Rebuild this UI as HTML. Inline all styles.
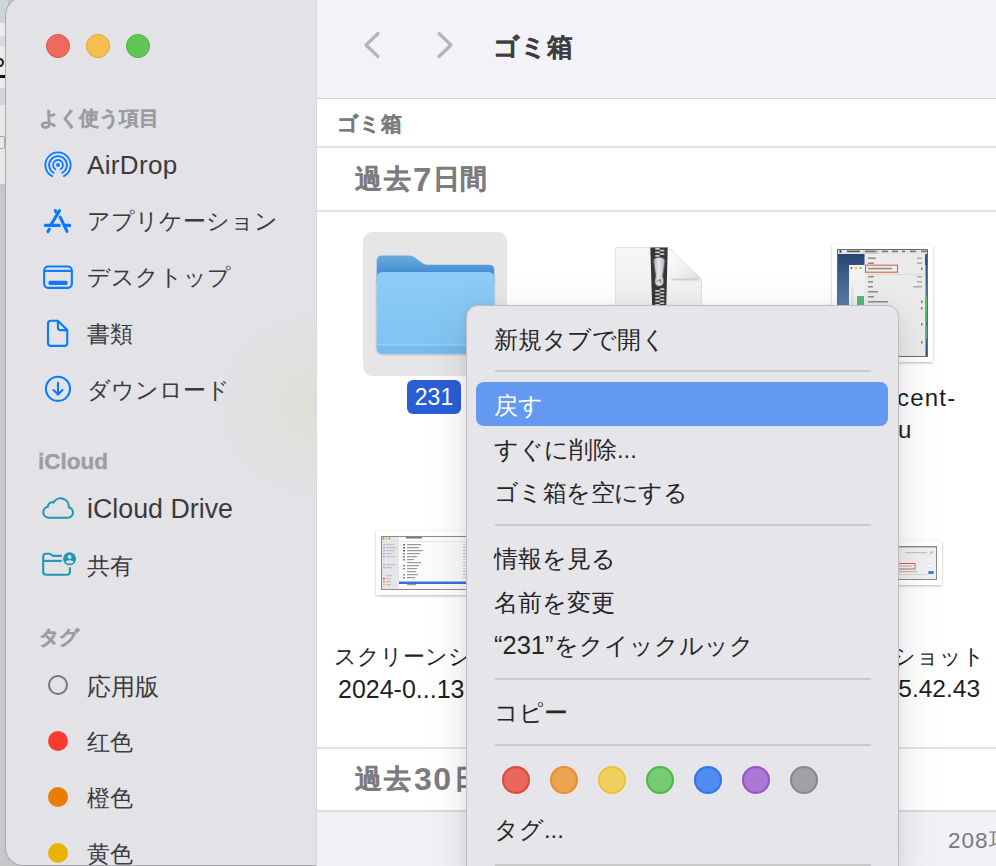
<!DOCTYPE html>
<html><head><meta charset="utf-8">
<style>
*{margin:0;padding:0;box-sizing:border-box}
html,body{width:996px;height:866px;overflow:hidden;background:#c6c6c8;font-family:"Liberation Sans",sans-serif;position:relative}
.a{position:absolute;white-space:nowrap}
#sliver{position:absolute;left:0;top:0;width:8px;height:866px;background:#c8c8ca}
#side{position:absolute;left:5px;top:-3px;width:312px;height:869px;background:#e3e2e7;border-radius:18px 0 0 18px;border:1px solid #a9a9ad;border-right:none;overflow:hidden}
#main{position:absolute;left:316px;top:0;width:680px;height:866px;background:#fff;border-left:1px solid #d6d6da}
.sh{color:#9d9da1;font-weight:700;font-size:20px;-webkit-text-stroke:0.35px #9d9da1}
.si{color:#3b3b3d;font-size:23px}
.hr{position:absolute;left:0;width:680px;height:2px;background:#e2e2e4}
.mi{position:absolute;left:27px;color:#262627;font-size:23.8px;white-space:nowrap}
.sep{position:absolute;left:28px;width:376px;height:2px;background:#c9c9cc}
.dot{position:absolute;width:28px;height:28px;border-radius:50%;top:465px}
.tag{position:absolute;left:48px;width:20px;height:20px;border-radius:50%}
</style></head><body>
<div id="sliver">
  <div class="a" style="left:0;top:0;width:8px;height:23px;background:#cfd4d9"></div>
  <div class="a" style="left:0;top:23px;width:8px;height:13px;background:#ededed"></div>
  <div class="a" style="left:0;top:36px;width:8px;height:10px;background:#dadadc"></div>
  <div class="a" style="left:0;top:46px;width:8px;height:42px;background:#ebebeb"></div>
  <div class="a" style="left:-4px;top:58px;width:8px;height:9px;border:2.5px solid #222;border-radius:50%"></div>
  <div class="a" style="left:0;top:75px;width:8px;height:3px;background:#111"></div>
  <div class="a" style="left:0;top:88px;width:8px;height:17px;background:#d6d6d9"></div>
  <div class="a" style="left:0;top:105px;width:8px;height:79px;background:#e8e8e8"></div>
  <div class="a" style="left:0;top:184px;width:8px;height:1px;background:#c0c0c0"></div>
  <div class="a" style="left:-6px;top:136px;width:11px;height:13px;border:1px solid #a8a8a8;border-radius:2px"></div>
</div>
<div id="side"></div>
<div class="a" style="left:180px;top:270px;width:136px;height:260px;background:radial-gradient(ellipse 105px 100px at 136px 135px, rgba(219,220,203,0.6), rgba(219,220,203,0) 100%)"></div>
<!-- traffic lights -->
<div class="a" style="left:46px;top:34px;width:24px;height:24px;border-radius:50%;background:#ee6a5f;border:1px solid #d8544a"></div>
<div class="a" style="left:86px;top:34px;width:24px;height:24px;border-radius:50%;background:#f5be4f;border:1px solid #dea236"></div>
<div class="a" style="left:126px;top:34px;width:24px;height:24px;border-radius:50%;background:#62c655;border:1px solid #4fad44"></div>
<div class="a sh" style="left:39px;top:105px">よく使う項目</div>
<div class="a si" style="left:87px;top:150px;font-size:26px;letter-spacing:0.35px">AirDrop</div>
<div class="a si" style="left:87px;top:206px;font-size:23.2px">アプリケーション</div>
<div class="a si" style="left:87px;top:262px">デスクトップ</div>
<div class="a si" style="left:87px;top:319px">書類</div>
<div class="a si" style="left:87px;top:375px;font-size:23px">ダウンロード</div>
<div class="a sh" style="left:38px;top:449px;font-size:22.5px">iCloud</div>
<div class="a si" style="left:87px;top:494px;font-size:26.8px">iCloud Drive</div>
<div class="a si" style="left:87px;top:551px;font-size:22.5px">共有</div>
<div class="a sh" style="left:39px;top:624px">タグ</div>
<div class="a si" style="left:87px;top:671px;font-size:23.5px">応用版</div>
<div class="a si" style="left:87px;top:727px">红色</div>
<div class="a si" style="left:87px;top:783px">橙色</div>
<div class="a si" style="left:87px;top:839px">黄色</div>
<div class="a" style="left:48px;top:675px;width:20px;height:20px;border-radius:50%;border:2px solid #77777a"></div>
<div class="a" style="left:48px;top:731px;width:20px;height:20px;border-radius:50%;background:#fb3b30"></div>
<div class="a" style="left:48px;top:787px;width:20px;height:20px;border-radius:50%;background:#e97c02"></div>
<div class="a" style="left:48px;top:843px;width:20px;height:20px;border-radius:50%;background:#e9b300"></div>

<div id="main"></div>
<div class="a" style="left:317px;top:0;width:679px;height:98px;background:#f3f2f7"></div>
<div class="a" style="left:317px;top:97.5px;width:679px;height:1.5px;background:#d2d2d5"></div>
<svg class="a" style="left:360px;top:28px" width="24" height="34" viewBox="0 0 24 34"><path d="M18 5.5 L6 17 L18 28.5" fill="none" stroke="#b5b5b9" stroke-width="3.2" stroke-linecap="round" stroke-linejoin="round"/></svg>
<svg class="a" style="left:433px;top:28px" width="24" height="34" viewBox="0 0 24 34"><path d="M6 5.5 L18 17 L6 28.5" fill="none" stroke="#b5b5b9" stroke-width="3.2" stroke-linecap="round" stroke-linejoin="round"/></svg>
<div class="a" style="left:493px;top:30px;font-size:26.3px;font-weight:700;color:#3d3d3f;-webkit-text-stroke:0.25px #3d3d3f">ゴミ箱</div>
<div class="a" style="left:337px;top:110px;font-size:21px;font-weight:700;color:#7a7a7c;-webkit-text-stroke:0.3px #7a7a7c">ゴミ箱</div>
<div class="a" style="left:317px;top:146px;width:679px;height:2px;background:#e3e3e5"></div>
<div class="a" style="left:355px;top:161px;font-size:26.5px;font-weight:700;color:#7c7c7e;-webkit-text-stroke:0.25px #7c7c7e;letter-spacing:1.5px">過去</div>
<div class="a" style="left:413px;top:161px;font-size:33px;font-weight:700;color:#7c7c7e">7</div>
<div class="a" style="left:433px;top:161px;font-size:26.5px;font-weight:700;color:#7c7c7e;-webkit-text-stroke:0.25px #7c7c7e;letter-spacing:0px">日間</div>
<div class="a" style="left:317px;top:210px;width:679px;height:2px;background:#e3e3e5"></div>
<div class="a" style="left:317px;top:747px;width:679px;height:2px;background:#e3e3e5"></div>
<div class="a" style="left:355px;top:761px;font-size:26.5px;font-weight:700;color:#7c7c7e;-webkit-text-stroke:0.25px #7c7c7e;letter-spacing:1.5px">過去</div>
<div class="a" style="left:414px;top:761px;font-size:32px;font-weight:700;color:#7c7c7e;letter-spacing:1.5px">30</div>
<div class="a" style="left:454px;top:761px;font-size:26.5px;font-weight:700;color:#7c7c7e;-webkit-text-stroke:0.25px #7c7c7e;letter-spacing:0px">日間</div>
<div class="a" style="left:317px;top:810px;width:679px;height:2px;background:#dcdce0"></div>
<div class="a" style="left:317px;top:812px;width:679px;height:54px;background:#f2f1f6"></div>
<div class="a" style="left:948px;top:825px;font-size:22.5px;color:#78787c;letter-spacing:1px">208項目</div>

<!-- sidebar icons -->
<svg class="a" style="left:38px;top:145px" width="40" height="40" viewBox="0 0 40 40" fill="none" stroke="#0a7aff" stroke-width="1.8" stroke-linecap="round">
<path d="M14.09 31.13 A12.6 12.6 0 1 1 25.91 31.13"/>
<path d="M15.68 27.79 A8.9 8.9 0 1 1 24.32 27.79"/>
<path d="M17.35 24.24 A5 5 0 1 1 22.65 24.24"/>
<circle cx="20" cy="20" r="1.9" fill="#0a7aff" stroke="none"/>
</svg>
<svg class="a" style="left:38px;top:200px" width="40" height="40" viewBox="0 0 40 40" fill="none" stroke="#0a7aff" stroke-width="3.1" stroke-linecap="round">
<path d="M21.5 10.6 L13 24.8 M11.3 29.3 L9.9 31.6 M17.3 10.6 L19 13.3 M22.2 17.2 L29 31.4 M7.4 25.4 H21.3 M27.4 25.4 H31.7"/>
</svg>
<svg class="a" style="left:38px;top:257px" width="40" height="40" viewBox="0 0 40 40" fill="none" stroke="#0a7aff" stroke-width="2.1">
<rect x="6.15" y="9.55" width="27.7" height="21.3" rx="4"/>
<path d="M6.15 13.9 H33.85"/>
<rect x="10.4" y="23.8" width="19.2" height="4.1" rx="1.6" fill="#0a7aff" stroke="none"/>
</svg>
<svg class="a" style="left:38px;top:313px" width="40" height="40" viewBox="0 0 40 40" fill="none" stroke="#0a7aff" stroke-width="2.1" stroke-linejoin="round">
<path d="M19.9 7.7 H13 Q10 7.7 10 10.7 V29.9 Q10 32.9 13 32.9 H26.25 Q29.25 32.9 29.25 29.9 V17.1 Z"/>
<path d="M19.9 7.7 V15.1 Q19.9 17.1 21.9 17.1 H29.25"/>
</svg>
<svg class="a" style="left:38px;top:369px" width="40" height="40" viewBox="0 0 40 40" fill="none" stroke="#0a7aff" stroke-width="2.1" stroke-linecap="round" stroke-linejoin="round">
<circle cx="19.95" cy="19.85" r="12.05"/>
<path d="M20 13.9 V25.2 M15.5 21 L20 25.4 L24.5 21"/>
</svg>
<svg class="a" style="left:38px;top:488px" width="40" height="40" viewBox="0 0 40 40" fill="none" stroke="#1f9ab3" stroke-width="2.1" stroke-linejoin="round">
<path d="M10.5 29.7 H30 A5.2 5.2 0 0 0 30.8 19.4 A8.2 8.2 0 0 0 15.6 14.4 A4.6 4.6 0 0 0 9.8 18.8 A5.5 5.5 0 0 0 10.5 29.7 Z"/>
</svg>
<svg class="a" style="left:38px;top:544px" width="40" height="40" viewBox="0 0 40 40" fill="none" stroke="#1f9ab3" stroke-width="2.1" stroke-linecap="butt" stroke-linejoin="round">
<path d="M23.8 11.9 H15.5 Q14.6 11.9 13.9 11.2 L12.9 10.3 Q12.3 9.7 11.3 9.7 H8.2 Q5.2 9.7 5.2 12.7 V27.7 Q5.2 30.7 8.2 30.7 H28.9 Q31.9 30.7 31.9 27.7 V23.3"/>
<path d="M5.2 16.9 H23.8"/>
<circle cx="31.6" cy="14.8" r="6.5" fill="#1f9ab3" stroke="none"/>
<circle cx="31.6" cy="12.9" r="1.9" fill="#e3e2e7" stroke="none"/>
<ellipse cx="31.6" cy="17.9" rx="3.6" ry="1.6" fill="#e3e2e7" stroke="none"/>
</svg>
<!-- icons -->
<div class="a" style="left:363px;top:232px;width:144px;height:144px;border-radius:9px;background:#e6e6e7"></div>
<svg class="a" style="left:374px;top:253px" width="124" height="106" viewBox="0 0 124 106">
  <defs>
    <linearGradient id="fb" x1="0" y1="0" x2="0" y2="1"><stop offset="0" stop-color="#8dcdf6"/><stop offset="1" stop-color="#7fc2f1"/></linearGradient>
    <linearGradient id="bk" gradientUnits="userSpaceOnUse" x1="0" y1="2.5" x2="0" y2="19"><stop offset="0" stop-color="#6aacde"/><stop offset="1" stop-color="#4690d4"/></linearGradient>
    <filter id="fsh" x="-10%" y="-10%" width="120%" height="130%"><feGaussianBlur stdDeviation="0.8"/></filter>
  </defs>
  <path d="M2.7 8 Q2.7 2.5 8 2.5 H35 Q38 2.5 40.5 4.3 L49 10.5 Q51 11.8 54 11.8 H115 Q120.3 11.8 120.3 17 V30 H2.7 Z" fill="url(#bk)"/>
  <rect x="2.7" y="20" width="117.6" height="81.5" rx="5.5" fill="#3a6f9c" opacity="0.45" filter="url(#fsh)"/>
  <rect x="2.7" y="19" width="117.6" height="81.4" rx="5.5" fill="url(#fb)"/>
  <rect x="2.7" y="90.7" width="117.6" height="2" fill="#93d1f7"/>
  <path d="M2.7 92.7 H120.3 V95 Q120.3 100.4 115 100.4 H8 Q2.7 100.4 2.7 95 Z" fill="#76bbec"/>
</svg>
<div class="a" style="left:407px;top:380px;width:54px;height:34px;border-radius:6px;background:#2b5fd6;color:#fff;font-size:23px;text-align:center;line-height:34px">231</div>

<!-- zip -->
<svg class="a" style="left:612px;top:244px" width="94" height="64" viewBox="0 0 94 64">
  <defs>
    <linearGradient id="flap" x1="0" y1="0" x2="1" y2="1"><stop offset="0" stop-color="#ffffff"/><stop offset="0.6" stop-color="#f0f0f0"/><stop offset="1" stop-color="#dcdcdc"/></linearGradient>
    <linearGradient id="pull" x1="0" y1="0" x2="1" y2="0"><stop offset="0" stop-color="#a9acb0"/><stop offset="0.45" stop-color="#e6e8eb"/><stop offset="1" stop-color="#b0b3b7"/></linearGradient>
    <linearGradient id="paper" x1="0" y1="0" x2="0" y2="1"><stop offset="0" stop-color="#f6f6f6"/><stop offset="1" stop-color="#efefef"/></linearGradient>
    <filter id="fs" x="-30%" y="-30%" width="160%" height="160%"><feGaussianBlur stdDeviation="1.2"/></filter>
  </defs>
  <path d="M3.5 4.5 Q3.5 3.5 4.5 3.5 H56 L89.5 35 V64 H3.5 Z" fill="url(#paper)" stroke="#e2e2e2" stroke-width="1"/>
  <path d="M57 4.5 V29 Q57 36 64 36 H88 Z" fill="#000" opacity="0.22" filter="url(#fs)"/>
  <path d="M56 3.5 V31 Q56 34.8 59.8 34.8 H89.5 Z" fill="url(#flap)"/>
  <path d="M38.3 3.5 H55.7 L54.2 64 H40.2 Z" fill="#363638"/>
  <g fill="#c9cacc"><rect x="43.2" y="4.0" width="4.6" height="1.7" rx="0.5"/><rect x="47.8" y="5.8" width="4.6" height="1.7" rx="0.5"/><rect x="43.2" y="7.5" width="4.6" height="1.7" rx="0.5"/><rect x="47.8" y="9.2" width="4.6" height="1.7" rx="0.5"/><rect x="43.2" y="11.0" width="4.6" height="1.7" rx="0.5"/><rect x="47.8" y="44.2" width="4.6" height="1.7" rx="0.5"/><rect x="43.2" y="46.0" width="4.6" height="1.7" rx="0.5"/><rect x="47.8" y="47.8" width="4.6" height="1.7" rx="0.5"/><rect x="43.2" y="49.5" width="4.6" height="1.7" rx="0.5"/><rect x="47.8" y="51.2" width="4.6" height="1.7" rx="0.5"/><rect x="43.2" y="53.0" width="4.6" height="1.7" rx="0.5"/><rect x="47.8" y="54.8" width="4.6" height="1.7" rx="0.5"/><rect x="43.2" y="56.5" width="4.6" height="1.7" rx="0.5"/><rect x="47.8" y="58.2" width="4.6" height="1.7" rx="0.5"/><rect x="43.2" y="60.0" width="4.6" height="1.7" rx="0.5"/><rect x="47.8" y="61.8" width="4.6" height="1.7" rx="0.5"/><rect x="43.2" y="63.5" width="4.6" height="1.7" rx="0.5"/></g>
  <path d="M41.7 17 Q41.7 13.4 47.25 13.4 Q52.8 13.4 52.8 17 L51.3 28 Q50.4 31 50.8 33 Q51.6 35 51.6 37.8 Q51.6 42 47.25 42 Q42.9 42 42.9 37.8 Q42.9 35 43.7 33 Q44.1 31 43.2 28 Z" fill="url(#pull)" stroke="#6d6f73" stroke-width="0.7"/>
  <path d="M45.5 37.5 Q47 34.5 48.5 36 Q47 38 49 39" fill="none" stroke="#55575b" stroke-width="0.9"/>
</svg>

<!-- thumbnail 1 -->
<div class="a" style="left:832px;top:245px;width:101px;height:117px;background:#fff;box-shadow:0 1px 2.5px rgba(0,0,0,0.28)"></div>
<svg class="a" style="left:837px;top:249px" width="91" height="108" viewBox="0 0 91 108">
  <defs><linearGradient id="desk" x1="0" y1="0" x2="0" y2="1"><stop offset="0" stop-color="#23406d"/><stop offset="0.5" stop-color="#5b7ba6"/><stop offset="1" stop-color="#31507f"/></linearGradient></defs>
  <rect x="0" y="0" width="91" height="108" fill="url(#desk)"/>
  <rect x="0" y="0" width="91" height="5" fill="#e4e4e4"/>
  <rect x="2.5" y="1.5" width="2" height="2" fill="#222"/>
  <rect x="10" y="1.6" width="13" height="1.6" fill="#555"/>
  <rect x="26" y="0" width="16" height="5" fill="#cfcfcf"/>
  <rect x="28" y="1.6" width="11" height="1.6" fill="#777"/>
  <rect x="45" y="1.6" width="6" height="1.6" fill="#777"/><rect x="55" y="1.6" width="6" height="1.6" fill="#777"/><rect x="65" y="1.6" width="3" height="1.6" fill="#777"/><rect x="73" y="1.6" width="6" height="1.6" fill="#777"/><rect x="84" y="1.6" width="6" height="1.6" fill="#777"/>
  <rect x="12" y="16" width="17" height="92" fill="#f2f2f2"/>
  <circle cx="14.5" cy="19" r="1.1" fill="#e5483e"/><circle cx="19" cy="19" r="1.1" fill="#f1b02b"/><circle cx="23.5" cy="19" r="1.1" fill="#50c144"/>
  <rect x="14" y="38" width="3" height="70" fill="#dfe9df"/>
  <rect x="20" y="47" width="7" height="61" fill="#55b878"/>
  <rect x="27.5" y="5" width="61" height="102" fill="#ebebeb"/>
  <rect x="31" y="8.5" width="8" height="1.5" fill="#8c8c8c"/><rect x="80" y="8.5" width="5" height="1.5" fill="#aaa"/>
  <rect x="31" y="13.5" width="6" height="1.5" fill="#8c8c8c"/><rect x="80" y="13.5" width="5" height="1.5" fill="#aaa"/>
  <rect x="28.5" y="16.2" width="32" height="7" fill="none" stroke="#e0604c" stroke-width="1.1"/>
  <rect x="31" y="18.8" width="24" height="1.5" fill="#8c8c8c"/><rect x="84" y="18.5" width="1.5" height="2.5" fill="#777"/>
  <rect x="29" y="25" width="58" height="0.6" fill="#d0d0d0"/>
  <rect x="31" y="27" width="6" height="1.5" fill="#8c8c8c"/><rect x="80" y="27" width="5" height="1.5" fill="#aaa"/>
  <rect x="31" y="32" width="5" height="1.5" fill="#8c8c8c"/><rect x="80" y="32" width="5" height="1.5" fill="#aaa"/>
  <rect x="31" y="37" width="5" height="1.5" fill="#8c8c8c"/><rect x="76" y="37" width="9" height="1.5" fill="#aaa"/>
  <rect x="31" y="42" width="10" height="1.5" fill="#8c8c8c"/>
  <rect x="31" y="47" width="6" height="1.5" fill="#8c8c8c"/>
  <rect x="31" y="52" width="20" height="1.5" fill="#8c8c8c"/><rect x="84" y="51.5" width="1.5" height="2.5" fill="#777"/>
  <rect x="84" y="58" width="1.5" height="2.5" fill="#777"/>
  <rect x="40" y="68" width="16" height="1.5" fill="#777"/>
  <rect x="84" y="74" width="1.5" height="2.5" fill="#777"/>
  <rect x="84" y="92" width="1.5" height="2.5" fill="#777"/>
  <rect x="88.2" y="5" width="2.8" height="11" fill="#2d4a78"/>
  <rect x="88.2" y="47" width="2.8" height="26" fill="#4fb878"/>
  <rect x="88.2" y="77" width="2.8" height="13" fill="#4fb878"/>
  <rect x="0.5" y="0.5" width="90" height="107" fill="none" stroke="#6b6b6b" stroke-width="1"/>
</svg>

<div class="a" style="left:897px;top:384px;font-size:24px;color:#1f1f1f;letter-spacing:1.2px">cent-</div>
<div class="a" style="left:898px;top:415.5px;font-size:24px;color:#1f1f1f">u</div>

<!-- thumbnail 2 -->
<div class="a" style="left:376px;top:531px;width:124px;height:64px;background:#fff;box-shadow:0 1px 2.5px rgba(0,0,0,0.28)"></div>
<svg class="a" style="left:381px;top:536px" width="114" height="54" viewBox="0 0 114 54">
  <rect x="0" y="0" width="114" height="54" fill="#fbfbfb"/>
  <rect x="0" y="0" width="18" height="54" fill="#e6e6e8"/>
  <circle cx="2.5" cy="2.5" r="0.9" fill="#e5483e"/><circle cx="5.5" cy="2.5" r="0.9" fill="#f1b02b"/><circle cx="8.5" cy="2.5" r="0.9" fill="#50c144"/>
  <g fill="#9ab3df"><rect x="2" y="8" width="2" height="1.5"/><rect x="2" y="11" width="2" height="1.5"/><rect x="2" y="14" width="2" height="1.5"/><rect x="2" y="17" width="2" height="1.5"/><rect x="2" y="20" width="2" height="1.5"/><rect x="2" y="28" width="2" height="1.5"/><rect x="2" y="31" width="2" height="1.5"/></g>
  <g fill="#c2c2c2"><rect x="5" y="8" width="8" height="1.2"/><rect x="5" y="11" width="11" height="1.2"/><rect x="5" y="14" width="9" height="1.2"/><rect x="5" y="17" width="6" height="1.2"/><rect x="5" y="20" width="9" height="1.2"/><rect x="5" y="28" width="10" height="1.2"/><rect x="5" y="31" width="6" height="1.2"/><rect x="5" y="39" width="6" height="1.2"/><rect x="5" y="42" width="5" height="1.2"/><rect x="5" y="45" width="5" height="1.2"/><rect x="5" y="48" width="5" height="1.2"/></g>
  <g fill="#e9564a"><rect x="2" y="42" width="2" height="1.5"/></g><g fill="#ee9a2e"><rect x="2" y="45" width="2" height="1.5"/></g><g fill="#e9c13a"><rect x="2" y="48" width="2" height="1.5"/></g>
  <rect x="25" y="1" width="16" height="1.5" fill="#777"/>
  <rect x="20" y="5" width="94" height="0.6" fill="#ddd"/>
  <g fill="#9a9a9a"><rect x="26" y="8" width="14" height="1.2"/><rect x="26" y="11" width="12" height="1.2"/><rect x="26" y="14" width="16" height="1.2"/><rect x="26" y="17" width="13" height="1.2"/><rect x="26" y="20" width="10" height="1.2"/><rect x="26" y="23" width="7" height="1.2"/><rect x="26" y="26" width="14" height="1.2"/><rect x="26" y="29" width="12" height="1.2"/><rect x="26" y="32" width="10" height="1.2"/><rect x="26" y="35" width="9" height="1.2"/><rect x="26" y="38" width="11" height="1.2"/><rect x="26" y="41" width="8" height="1.2"/><rect x="26" y="48" width="9" height="1.2"/></g>
  <g fill="#3a6fd8"><rect x="22" y="8" width="2" height="1.5"/><rect x="22" y="11" width="2" height="1.5"/><rect x="22" y="14" width="2" height="1.5"/></g>
  <g fill="#8a8a8a"><rect x="22" y="17" width="2" height="1.5"/><rect x="22" y="20" width="2" height="1.5"/><rect x="22" y="23" width="2" height="1.5"/><rect x="22" y="29" width="2" height="1.5"/><rect x="22" y="32" width="2" height="1.5"/><rect x="22" y="38" width="2" height="1.5"/><rect x="22" y="41" width="2" height="1.5"/></g>
  <g fill="#d0d0d0"><rect x="82" y="8" width="20" height="1"/><rect x="82" y="11" width="20" height="1"/><rect x="82" y="14" width="20" height="1"/><rect x="82" y="17" width="20" height="1"/><rect x="82" y="20" width="20" height="1"/><rect x="82" y="23" width="20" height="1"/><rect x="82" y="26" width="20" height="1"/><rect x="82" y="29" width="20" height="1"/><rect x="82" y="32" width="20" height="1"/><rect x="82" y="35" width="20" height="1"/><rect x="82" y="38" width="20" height="1"/><rect x="82" y="41" width="20" height="1"/></g>
  <rect x="18" y="45.5" width="96" height="2.5" fill="#3a6fdc"/>
  <rect x="0.5" y="0.5" width="113" height="53" fill="none" stroke="#8a8a8a" stroke-width="1"/>
</svg>

<div class="a" style="left:287px;top:642px;font-size:22.3px;color:#1f1f1f;width:300px;text-align:center">スクリーンショット</div>
<div class="a" style="left:286px;top:675px;font-size:25px;color:#1f1f1f;width:300px;text-align:center">2024-0...13.42.43</div>

<!-- thumbnail 3 -->
<div class="a" style="left:822px;top:541px;width:120px;height:44px;background:#fff;box-shadow:0 1px 2.5px rgba(0,0,0,0.28)"></div>
<svg class="a" style="left:827px;top:546px" width="110" height="34" viewBox="0 0 110 34">
  <rect x="0" y="0" width="110" height="34" fill="#f0f0f0"/>
  <rect x="0" y="0" width="110" height="1.5" fill="#9a9a9a"/>
  <g fill="#c4c4c4"><rect x="78" y="6" width="22" height="1.2"/><rect x="103" y="5.5" width="3" height="2"/></g>
  <rect x="55" y="17.5" width="33" height="5.5" fill="none" stroke="#e0604c" stroke-width="1"/>
  <rect x="63" y="19.5" width="22" height="1.2" fill="#bdbdbd"/>
  <rect x="100" y="18" width="6" height="3" rx="1.5" fill="#fff" stroke="#ccc" stroke-width="0.5"/>
  <rect x="70" y="25" width="20" height="1.2" fill="#bdbdbd"/><rect x="72" y="28" width="28" height="1" fill="#d8d8d8"/>
  <rect x="101" y="25" width="6" height="3" rx="1.5" fill="#3a7ae8"/>
  <rect x="0.5" y="0.5" width="109" height="33" fill="none" stroke="#8a8a8a" stroke-width="1"/>
</svg>

<div class="a" style="left:732px;top:642px;font-size:22.3px;color:#1f1f1f;width:300px;text-align:center">スクリーンショット</div>
<div class="a" style="left:734px;top:675px;font-size:24.5px;color:#1f1f1f;width:300px;text-align:center">2024-0...15.42.43</div>

<!-- context menu -->
<div class="a" style="left:466px;top:305px;width:433px;height:580px;background:#e6e5ea;border:1px solid #bdbcc0;border-radius:12px;box-shadow:0 12px 44px rgba(0,0,0,0.13),0 2px 8px rgba(0,0,0,0.06)">
  <div class="mi" style="top:18px">新規タブで開く</div>
  <div class="sep" style="top:64px"></div>
  <div style="position:absolute;left:9px;top:76px;width:412px;height:44px;border-radius:8px;background:#6399f1"></div>
  <div class="mi" style="top:84px;color:#fff">戻す</div>
  <div class="mi" style="top:128px">すぐに削除...</div>
  <div class="mi" style="top:171px;letter-spacing:-0.6px">ゴミ箱を空にする</div>
  <div class="sep" style="top:218px"></div>
  <div class="mi" style="top:237px">情報を見る</div>
  <div class="mi" style="top:281px">名前を変更</div>
  <div class="mi" style="top:324px"><span style="font-size:25.5px">“231”</span>をクイックルック</div>
  <div class="sep" style="top:372px"></div>
  <div class="mi" style="top:391px">コピー</div>
  <div class="sep" style="top:438px"></div>
  <div class="dot" style="left:35px;background:#e8685e;border:2px solid #e2473c;top:460px"></div>
  <div class="dot" style="left:83px;background:#eba552;border:2px solid #ec8d2a;top:460px"></div>
  <div class="dot" style="left:131px;background:#f0d05e;border:2px solid #efc136;top:460px"></div>
  <div class="dot" style="left:179px;background:#76cc72;border:2px solid #4bb945;top:460px"></div>
  <div class="dot" style="left:227px;background:#4e8cf0;border:2px solid #2e72ec;top:460px"></div>
  <div class="dot" style="left:275px;background:#aa77d4;border:2px solid #9852c9;top:460px"></div>
  <div class="dot" style="left:323px;background:#a1a1a5;border:2px solid #88888c;top:460px"></div>
  <div class="mi" style="top:508px">タグ...</div>
  <div class="sep" style="top:558px"></div>
</div>
</body></html>
